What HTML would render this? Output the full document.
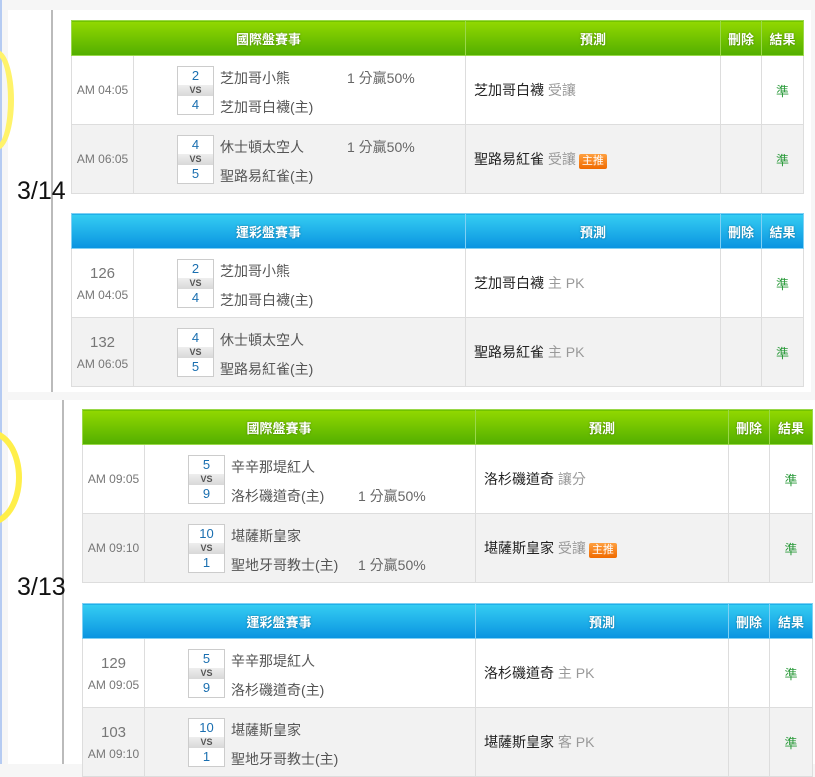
<!DOCTYPE html>
<html><head><meta charset="utf-8"><style>
*{margin:0;padding:0;box-sizing:border-box}
body{width:815px;height:764px;overflow:hidden;background:#f6f6f6;font-family:"Liberation Sans","Noto Sans CJK TC",sans-serif;position:relative}
.strip{position:absolute;left:0;top:0;width:2px;height:764px;background:#b5cbf2}
.panel{position:absolute;background:#fff}
.vl{position:absolute;width:2px;background:#bbb}
.date{position:absolute;font-size:25px;color:#111}
table{position:absolute;border-collapse:collapse;table-layout:fixed}
td,th{border:1px solid #ddd;font-size:13px}
th{height:35px;color:#fff;font-weight:bold;text-shadow:0 0 2px rgba(0,0,0,.35);border-color:#9ad84a}
.g th{background:linear-gradient(#92d800,#52ae00)}
.b th{background:linear-gradient(#35cdf2,#0993e0);border-color:#7fd0f4}
tr.r{height:69px}
tr.r2 td{background:#f2f2f2}
td.t{text-align:center;color:#777;font-size:12px}
td.t .n{font-size:15px;display:block;margin-bottom:6px}
td.m{position:relative}
.box{position:absolute;left:43px;top:10px;width:37px;border:1px solid #ccc;background:#fff}
.box div{text-align:center;color:#1a6fb0;font-size:13px;height:18px;line-height:18px}
.box .vs{height:11px;line-height:11px;font-size:9px;color:#555;background:linear-gradient(#eee,#d8d8d8);font-weight:bold}
.tm{position:absolute;left:86px;color:#555;font-size:14px}
.od{position:absolute;left:213px;color:#666;font-size:14px}
td.p{padding-left:8px;color:#222;font-size:14px}
td.p span{color:#999}
.tag{display:inline-block;background:linear-gradient(#ffa040,#f06a00);color:#fff!important;font-size:11px;padding:0 3px;line-height:15px;border-radius:2px;margin-left:3px}
td.res{text-align:center;color:#2a9a3a;font-size:13px}
.bulb{position:absolute;border:6px solid #ffef4a;border-radius:50%}
</style></head><body>
<div class="strip"></div>
<div class="panel" style="left:8px;top:10px;width:803px;height:382px"></div>
<div class="panel" style="left:8px;top:400px;width:807px;height:364px"></div>
<div class="vl" style="left:51px;top:10px;height:382px"></div>
<div class="vl" style="left:62px;top:400px;height:364px"></div>
<div class="bulb" style="left:-20px;top:50px;width:34px;height:100px;border-color:#fff36a"></div>
<div class="bulb" style="left:-40px;top:430px;width:62px;height:95px"></div>
<div class="date" style="left:17px;top:177px">3/14</div>
<div class="date" style="left:17px;top:573px">3/13</div>

<table class="g" style="left:71px;top:20px;width:732px">
<colgroup><col style="width:62px"><col style="width:332px"><col style="width:255px"><col style="width:41px"><col style="width:42px"></colgroup>
<tr><th colspan="2">國際盤賽事</th><th>預測</th><th>刪除</th><th>結果</th></tr>
<tr class="r"><td class="t">AM 04:05</td><td class="m"><div class="box"><div>2</div><div class="vs">VS</div><div>4</div></div><span class="tm" style="top:12px">芝加哥小熊</span><span class="od" style="top:12px">1 分贏50%</span><span class="tm" style="top:41px">芝加哥白襪(主)</span></td><td class="p">芝加哥白襪 <span>受讓</span></td><td></td><td class="res">準</td></tr>
<tr class="r r2"><td class="t">AM 06:05</td><td class="m"><div class="box"><div>4</div><div class="vs">VS</div><div>5</div></div><span class="tm" style="top:12px">休士頓太空人</span><span class="od" style="top:12px">1 分贏50%</span><span class="tm" style="top:41px">聖路易紅雀(主)</span></td><td class="p">聖路易紅雀 <span>受讓</span><span class="tag">主推</span></td><td></td><td class="res">準</td></tr>
</table>

<table class="b" style="left:71px;top:213px;width:732px">
<colgroup><col style="width:62px"><col style="width:332px"><col style="width:255px"><col style="width:41px"><col style="width:42px"></colgroup>
<tr><th colspan="2">運彩盤賽事</th><th>預測</th><th>刪除</th><th>結果</th></tr>
<tr class="r"><td class="t"><span class="n">126</span>AM 04:05</td><td class="m"><div class="box"><div>2</div><div class="vs">VS</div><div>4</div></div><span class="tm" style="top:12px">芝加哥小熊</span><span class="tm" style="top:41px">芝加哥白襪(主)</span></td><td class="p">芝加哥白襪 <span>主 PK</span></td><td></td><td class="res">準</td></tr>
<tr class="r r2"><td class="t"><span class="n">132</span>AM 06:05</td><td class="m"><div class="box"><div>4</div><div class="vs">VS</div><div>5</div></div><span class="tm" style="top:12px">休士頓太空人</span><span class="tm" style="top:41px">聖路易紅雀(主)</span></td><td class="p">聖路易紅雀 <span>主 PK</span></td><td></td><td class="res">準</td></tr>
</table>

<table class="g" style="left:82px;top:409px;width:730px">
<colgroup><col style="width:62px"><col style="width:331px"><col style="width:253px"><col style="width:41px"><col style="width:43px"></colgroup>
<tr><th colspan="2">國際盤賽事</th><th>預測</th><th>刪除</th><th>結果</th></tr>
<tr class="r"><td class="t">AM 09:05</td><td class="m"><div class="box"><div>5</div><div class="vs">VS</div><div>9</div></div><span class="tm" style="top:12px">辛辛那堤紅人</span><span class="tm" style="top:41px">洛杉磯道奇(主)</span><span class="od" style="top:41px">1 分贏50%</span></td><td class="p">洛杉磯道奇 <span>讓分</span></td><td></td><td class="res">準</td></tr>
<tr class="r r2"><td class="t">AM 09:10</td><td class="m"><div class="box"><div>10</div><div class="vs">VS</div><div>1</div></div><span class="tm" style="top:12px">堪薩斯皇家</span><span class="tm" style="top:41px">聖地牙哥教士(主)</span><span class="od" style="top:41px">1 分贏50%</span></td><td class="p">堪薩斯皇家 <span>受讓</span><span class="tag">主推</span></td><td></td><td class="res">準</td></tr>
</table>

<table class="b" style="left:82px;top:603px;width:730px">
<colgroup><col style="width:62px"><col style="width:331px"><col style="width:253px"><col style="width:41px"><col style="width:43px"></colgroup>
<tr><th colspan="2">運彩盤賽事</th><th>預測</th><th>刪除</th><th>結果</th></tr>
<tr class="r"><td class="t"><span class="n">129</span>AM 09:05</td><td class="m"><div class="box"><div>5</div><div class="vs">VS</div><div>9</div></div><span class="tm" style="top:12px">辛辛那堤紅人</span><span class="tm" style="top:41px">洛杉磯道奇(主)</span></td><td class="p">洛杉磯道奇 <span>主 PK</span></td><td></td><td class="res">準</td></tr>
<tr class="r r2"><td class="t"><span class="n">103</span>AM 09:10</td><td class="m"><div class="box"><div>10</div><div class="vs">VS</div><div>1</div></div><span class="tm" style="top:12px">堪薩斯皇家</span><span class="tm" style="top:41px">聖地牙哥教士(主)</span></td><td class="p">堪薩斯皇家 <span>客 PK</span></td><td></td><td class="res">準</td></tr>
</table>
</body></html>
